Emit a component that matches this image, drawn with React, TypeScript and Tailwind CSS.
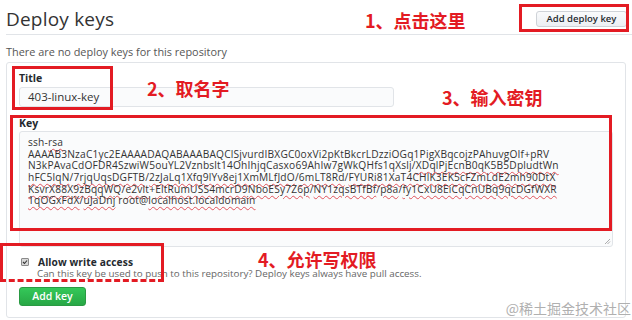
import React from "react";

function U({ children }: { children: React.ReactNode }) {
  return (
    <span className="underline decoration-wavy decoration-[#e0525a] decoration-[0.8px] underline-offset-[1.5px]">
      {children}
    </span>
  );
}

function KeyLine({ parts }: { parts: (string | [string])[] }) {
  return (
    <div className="whitespace-pre h-[11.7px] leading-[11.7px]">
      {parts.map((p, i) =>
        Array.isArray(p) ? <U key={i}>{p[0]}</U> : <span key={i}>{p}</span>
      )}
    </div>
  );
}

function Note({ children, className }: { children: React.ReactNode; className: string }) {
  return (
    <div
      className={`absolute text-[18px] font-bold leading-[18px] text-[#e31b23] font-['Noto_Sans_CJK_SC',sans-serif] whitespace-nowrap ${className}`}
    >
      {children}
    </div>
  );
}

export default function App() {
  return (
    <div className="relative w-[632px] h-[320px] overflow-hidden bg-white font-['Open_Sans',sans-serif] text-[#24292e]">
      <div className="flex flex-col pl-[6px]">
        {/* header */}
        <div className="flex h-[35px] items-center justify-between border-b border-[#e1e4e8] pr-[5px] pt-[3px]">
          <h2 className="text-[19px] leading-[22px] font-normal text-[#333] tracking-[0.2px]">Deploy keys</h2>
          <button className="h-[16px] w-[91px] rounded-[3px] border border-[#cfd3d8] bg-linear-to-b from-[#fafbfc] to-[#eceff3] text-[9.5px] font-semibold leading-[14px] text-[#24292e]">
            Add deploy key
          </button>
        </div>
        <p className="mt-[10px] text-[10.9px] leading-[13px] text-[#555]">There are no deploy keys for this repository</p>

        {/* card */}
        <form className="mt-[4px] flex w-[620px] h-[256px] flex-col items-start rounded-[3px] border border-[#e1e4e8] px-[12px] pt-[8px]">
          <label className="block text-[10.5px] font-bold leading-[14px]">Title</label>
          <div className="mt-[2px] flex h-[20px] w-[375px] items-center rounded-[3px] border border-[#e1e4e8] bg-[#fafbfc] pl-[8px] text-[11.5px] text-[#333]">
            403-linux-key
          </div>
          <label className="mt-[9px] block text-[10.5px] font-bold leading-[14px]">Key</label>
          <div className="relative mt-[1px] h-[116px] w-full rounded-[3px] border border-[#e1e4e8] bg-[#fafbfc] pl-[8px] pt-[5px] text-[10.2px] tracking-[0.18px] text-[#333]">
            <KeyLine parts={["ssh-", ["rsa"]]} />
            <KeyLine parts={["AAAAB3NzaC1yc2EAAAADAQABAAABAQClSjvurdIBXGC0oxVi2pKtBkcrLDzziOGq1PigXBqcojzPAhuvgOIf+pRV"]} />
            <KeyLine parts={["N3kPAvaCdOFDR4SzwiW5ouYL2Vznbslt14OhIhjqCasxo69AhIw7gWkQHfs1qXslj/", ["XDqlPjEcnB0qK5B5DpludtWn"]]} />
            <KeyLine
              parts={[
                ["hFC5lqN"], "/", ["7rjqUqsDGFTB"], "/", ["2zJaLq1Xfq9lYv8ej1XmMLfJdO"], "/", ["6mLT8Rd"], "/",
                ["FYURi81XaT4CHlK3EK5cFZmLdE2mh90DtX"],
              ]}
            />
            <KeyLine
              parts={[
                ["KsvrX88X9zBqqWQ"], "/", ["e2vlt"], "+", ["EltRumUSS4mcrD9NboESy7Z6p"], "/", ["NY1zqsBTfBf"], "/", ["p8a"], "/",
                ["fy1CxU8EiCqCnUBq9qcDGfWXR"],
              ]}
            />
            <KeyLine parts={[["1qOGxFdX"], "/", ["uJaDnj"], " root@", ["localhost.localdomain"]]} />
            <svg className="absolute bottom-[1px] right-[1px]" width="7" height="7" viewBox="0 0 7 7">
              <path d="M6 1 L1 6 M6 3.5 L3.5 6" stroke="#999" strokeWidth="0.8" />
            </svg>
          </div>

          <div className="mt-[9px] flex h-[12px] items-center pl-[2px]">
            <span className="flex h-[8px] w-[8px] items-center justify-center rounded-[1px] border border-[#8a8a8a] bg-[#d8d8d8]">
              <svg width="6" height="6" viewBox="0 0 6 6">
                <path d="M1 3 L2.5 4.5 L5 1.5" stroke="#333" strokeWidth="1.1" fill="none" />
              </svg>
            </span>
            <span className="ml-[9px] text-[10.2px] font-bold leading-[12px] tracking-[0.1px] text-[#24292e]">Allow write access</span>
          </div>
          <p className="pl-[18px] text-[9.8px] leading-[11px] text-[#666]">
            Can this key be used to push to this repository? Deploy keys always have pull access.
          </p>
          <button
            type="button"
            className="mt-[8px] h-[19px] w-[67px] rounded-[3px] border border-[#2a9a43] bg-linear-to-b from-[#34c859] to-[#28a745] text-[10.5px] font-semibold leading-[17px] text-white"
          >
            Add key
          </button>
        </form>
      </div>

      {/* annotations overlaid on the screenshot */}
      <div className="absolute left-[519px] top-[4px] h-[28px] w-[110px] border-[3px] border-[#e31b23]" />
      <Note className="left-[365px] top-[11px]">1、点击这里</Note>
      <div className="absolute left-[12px] top-[66px] h-[44px] w-[101px] border-[3px] border-[#e31b23]" />
      <Note className="left-[147px] top-[79px]">2、取名字</Note>
      <Note className="left-[442px] top-[88px]">3、输入密钥</Note>
      <div className="absolute left-[10px] top-[115px] h-[116px] w-[602px] border-[3px] border-[#e31b23]" />
      <Note className="left-[258px] top-[250px]">4、允许写权限</Note>
      <div className="absolute left-0 top-[243px] h-[39px] w-[164px] border-[3px] border-b-0 border-[#e31b23]" />
      <div className="absolute left-0 top-[279px] h-[3px] w-[164px] border-t-[3px] border-dashed border-[#e31b23]" />
      <div className="absolute right-[1px] top-[299px] text-[14px] leading-[18px] text-[#b0b0b0] font-['Noto_Sans_CJK_SC',sans-serif] whitespace-nowrap">
        @稀土掘金技术社区
      </div>
    </div>
  );
}
